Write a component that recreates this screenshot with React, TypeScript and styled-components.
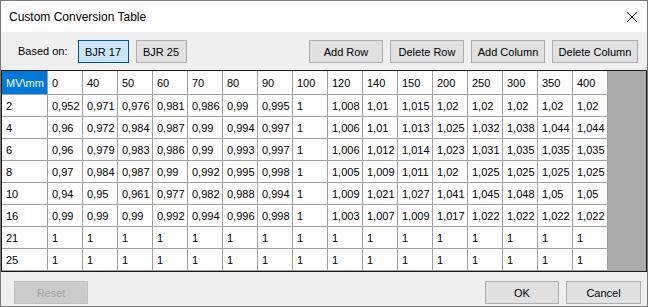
import React from 'react'
import styled, { createGlobalStyle } from 'styled-components'

const GlobalStyle = createGlobalStyle`
  html, body {
    margin: 0;
    padding: 0;
    background: #ffffff;
  }
  * {
    box-sizing: border-box;
  }
`

const Window = styled.div`
  width: 648px;
  height: 307px;
  border: 1px solid #7a7a7a;
  display: flex;
  flex-direction: column;
  background: #f0f0f0;
  font-family: "Liberation Sans", Arial, sans-serif;
  font-size: 11px;
  color: #000;
  overflow: hidden;
`

const TitleBar = styled.div`
  height: 31px;
  flex: none;
  background: #ffffff;
  display: flex;
  align-items: center;
  justify-content: space-between;
  padding: 0 9px 0 8px;
`

const Title = styled.span`
  font-size: 12px;
`

const CloseIcon = styled.svg`
  width: 12px;
  height: 12px;
  display: block;
`

const Toolbar = styled.div`
  height: 38px;
  flex: none;
  display: flex;
  align-items: flex-start;
  padding: 8px 9px 0 17px;
`

const Label = styled.span`
  line-height: 23px;
  margin-right: 10px;
`

const Group = styled.div<{ $push?: boolean }>`
  display: flex;
  gap: ${({ $push }) => ($push ? '7px' : '7px')};
  margin-left: ${({ $push }) => ($push ? 'auto' : '0')};
`

const Button = styled.button<{ $w: number; $active?: boolean }>`
  width: ${({ $w }) => $w}px;
  height: 23px;
  padding: 0;
  font-family: inherit;
  font-size: 11px;
  color: #000;
  background: ${({ $active }) => ($active ? '#cce4f7' : '#e1e1e1')};
  border: 1px solid ${({ $active }) => ($active ? '#005499' : '#adadad')};
  border-radius: 0;
  outline: none;

  &:disabled {
    background: #cccccc;
    border-color: #bfbfbf;
    color: #a3a3a3;
  }
`

const GridFrame = styled.div`
  flex: none;
  height: 202px;
  border: 1px solid #1a1a1a;
  background: #ababab;
  display: flex;
  align-items: flex-start;
`

const Table = styled.div`
  display: grid;
  grid-template-columns: 46px repeat(16, 35px);
  grid-template-rows: 24px repeat(8, 22px);
  background: #ffffff;
`

const Cell = styled.div<{ $corner?: boolean }>`
  border-right: 1px solid #a0a0a0;
  border-bottom: 1px solid #a0a0a0;
  padding-left: 4px;
  display: flex;
  align-items: center;
  white-space: nowrap;
  overflow: hidden;
  background: ${({ $corner }) => ($corner ? '#0078d7' : '#ffffff')};
  color: ${({ $corner }) => ($corner ? '#ffffff' : '#000000')};
  box-shadow: ${({ $corner }) => ($corner ? 'inset 0 0 0 0 #0078d7' : 'none')};
`

const Footer = styled.div`
  flex: 1;
  display: flex;
  align-items: flex-start;
  padding: 9px 6px 0 13px;
`

const FooterRight = styled.div`
  margin-left: auto;
  display: flex;
  gap: 7px;
`

const columns = ['0', '40', '50', '60', '70', '80', '90', '100', '120', '140', '150', '200', '250', '300', '350', '400']

const rows: [string, string[]][] = [
  ['2', ['0,952', '0,971', '0,976', '0,981', '0,986', '0,99', '0,995', '1', '1,008', '1,01', '1,015', '1,02', '1,02', '1,02', '1,02', '1,02']],
  ['4', ['0,96', '0,972', '0,984', '0,987', '0,99', '0,994', '0,997', '1', '1,006', '1,01', '1,013', '1,025', '1,032', '1,038', '1,044', '1,044']],
  ['6', ['0,96', '0,979', '0,983', '0,986', '0,99', '0,993', '0,997', '1', '1,006', '1,012', '1,014', '1,023', '1,031', '1,035', '1,035', '1,035']],
  ['8', ['0,97', '0,984', '0,987', '0,99', '0,992', '0,995', '0,998', '1', '1,005', '1,009', '1,011', '1,02', '1,025', '1,025', '1,025', '1,025']],
  ['10', ['0,94', '0,95', '0,961', '0,977', '0,982', '0,988', '0,994', '1', '1,009', '1,021', '1,027', '1,041', '1,045', '1,048', '1,05', '1,05']],
  ['16', ['0,99', '0,99', '0,99', '0,992', '0,994', '0,996', '0,998', '1', '1,003', '1,007', '1,009', '1,017', '1,022', '1,022', '1,022', '1,022']],
  ['21', Array(16).fill('1')],
  ['25', Array(16).fill('1')],
]

const App: React.FC = () => {
  return (
    <>
      <GlobalStyle />
      <Window>
        <TitleBar>
          <Title>Custom Conversion Table</Title>
          <CloseIcon viewBox="0 0 12 12">
            <path d="M1 1 L11 11 M11 1 L1 11" stroke="#000" strokeWidth="1" fill="none" />
          </CloseIcon>
        </TitleBar>
        <Toolbar>
          <Label>Based on:</Label>
          <Group>
            <Button $w={51} $active>BJR 17</Button>
            <Button $w={51}>BJR 25</Button>
          </Group>
          <Group $push>
            <Button $w={74}>Add Row</Button>
            <Button $w={74}>Delete Row</Button>
            <Button $w={74}>Add Column</Button>
            <Button $w={86}>Delete Column</Button>
          </Group>
        </Toolbar>
        <GridFrame>
          <Table>
            <Cell $corner>MV\mm</Cell>
            {columns.map((c) => (
              <Cell key={c}>{c}</Cell>
            ))}
            {rows.map(([label, values]) => (
              <React.Fragment key={label}>
                <Cell>{label}</Cell>
                {values.map((v, i) => (
                  <Cell key={i}>{v}</Cell>
                ))}
              </React.Fragment>
            ))}
          </Table>
        </GridFrame>
        <Footer>
          <Button $w={74} disabled>Reset</Button>
          <FooterRight>
            <Button $w={74}>OK</Button>
            <Button $w={75}>Cancel</Button>
          </FooterRight>
        </Footer>
      </Window>
    </>
  )
}

export default App
